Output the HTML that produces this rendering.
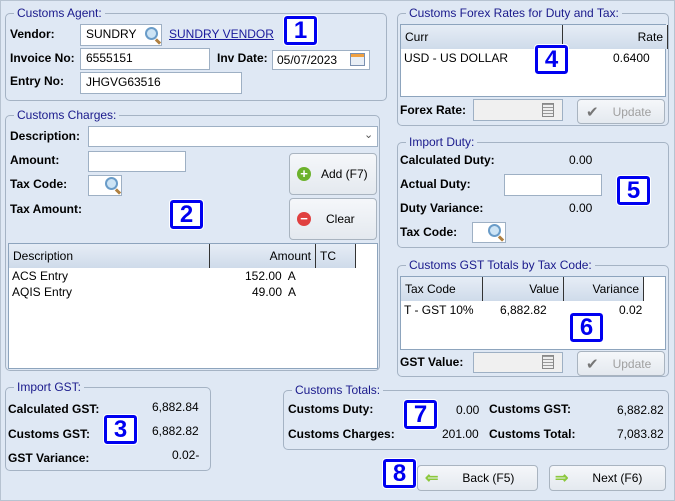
<!DOCTYPE html>
<html><head><style>
*{box-sizing:border-box}
body{margin:0;width:675px;height:501px;background:#dfe8f4;font-family:"Liberation Sans",Arial,sans-serif;font-size:12px;color:#000;position:relative;overflow:hidden}
.a{position:absolute}
.g{position:absolute;border:1px solid #a5b3c4;border-radius:5px}
.gt{position:absolute;top:-8px;left:8px;background:#dfe8f4;color:#1a1a8c;padding:0 3px;font-size:12px;line-height:14px}
.b{font-weight:bold}
.in{position:absolute;background:#fff;border:1px solid #9eb0c4;padding:2px 5px;line-height:14px}
.dis{background:#f0f0f0}
.btn{position:absolute;border:1px solid #a9b4c0;border-radius:4px;background:linear-gradient(#f5f7fa,#e4e9ef);display:flex;align-items:center}
.box{position:absolute;width:33px;height:29px;border:3px solid #0000f0;border-radius:3px;background:#fff;color:#0000f0;font-weight:bold;font-size:24px;text-align:center;line-height:23px;outline:1px solid #fff}
.grid{position:absolute;background:#fff;border:1px solid #8da4bd}
.hd{position:absolute;top:0;height:24px;background:linear-gradient(#e6edf6,#cfdbea);border-right:1px solid #333;line-height:24px;padding:0 4px}
.mag{position:absolute;width:13px;height:13px;border:2px solid #6a9cc8;border-radius:50%;background:#cde4f5}
.mag:after{content:"";position:absolute;width:6px;height:3px;background:#b08040;transform:rotate(45deg);left:8px;top:11px}
</style></head><body>
<div class="a" style="left:0;top:0;width:675px;height:501px;border:1px solid #b7c3d1"></div>

<!-- Customs Agent -->
<div class="g" style="left:5px;top:13px;width:382px;height:88px"><span class="gt">Customs Agent:</span></div>
<div class="a b" style="left:10px;top:27px">Vendor:</div>
<div class="in" style="left:80px;top:24px;width:82px;height:22px">SUNDRY</div>
<div class="mag" style="left:145px;top:27px"></div>
<div class="a" style="left:169px;top:27px;color:#1a1a9c;text-decoration:underline">SUNDRY VENDOR</div>
<div class="box" style="left:284px;top:16px">1</div>
<div class="a b" style="left:10px;top:51px">Invoice No:</div>
<div class="in" style="left:80px;top:48px;width:130px;height:22px">6555151</div>
<div class="a b" style="left:217px;top:51px">Inv Date:</div>
<div class="in" style="left:272px;top:50px;width:98px;height:20px;padding-left:4px">05/07/2023</div>
<div class="a" style="left:350px;top:53px;width:15px;height:13px;border:1px solid #7a90b0;background:linear-gradient(#f0a040 0 3px,#e8eef5 3px)"></div>
<div class="a b" style="left:10px;top:74px">Entry No:</div>
<div class="in" style="left:80px;top:72px;width:162px;height:22px">JHGVG63516</div>

<!-- Customs Charges -->
<div class="g" style="left:5px;top:115px;width:375px;height:256px"><span class="gt">Customs Charges:</span></div>
<div class="a b" style="left:10px;top:129px">Description:</div>
<div class="in" style="left:88px;top:126px;width:290px;height:21px"></div>
<div class="a" style="left:364px;top:128px;font-size:11px;color:#555">&#8964;</div>
<div class="a b" style="left:10px;top:153px">Amount:</div>
<div class="in" style="left:88px;top:151px;width:98px;height:21px"></div>
<div class="a b" style="left:10px;top:177px">Tax Code:</div>
<div class="in" style="left:88px;top:175px;width:34px;height:21px"></div>
<div class="mag" style="left:105px;top:177px"></div>
<div class="a b" style="left:10px;top:202px">Tax Amount:</div>
<div class="box" style="left:170px;top:200px">2</div>
<div class="btn" style="left:289px;top:153px;width:88px;height:42px"><span style="margin-left:7px;width:14px;height:14px;border-radius:50%;background:#6cb22c;color:#fff;font-size:13px;line-height:14px;text-align:center;font-weight:bold">+</span><span style="margin-left:10px">Add (F7)</span></div>
<div class="btn" style="left:289px;top:198px;width:88px;height:42px"><span style="margin-left:7px;width:14px;height:14px;border-radius:50%;background:#e04040;color:#fff;font-size:13px;line-height:13px;text-align:center;font-weight:bold">&minus;</span><span style="margin-left:15px">Clear</span></div>
<div class="grid" style="left:8px;top:243px;width:370px;height:126px">
 <div class="hd" style="left:0;width:201px">Description</div>
 <div class="hd" style="left:201px;width:106px;text-align:right">Amount</div>
 <div class="hd" style="left:307px;width:40px">TC</div>
 <div class="a" style="left:3px;top:25px">ACS Entry</div><div class="a" style="left:236px;top:25px">152.00&nbsp; A</div>
 <div class="a" style="left:3px;top:41px">AQIS Entry</div><div class="a" style="left:243px;top:41px">49.00&nbsp; A</div>
</div>

<!-- Forex -->
<div class="g" style="left:397px;top:13px;width:272px;height:113px"><span class="gt">Customs Forex Rates for Duty and Tax:</span></div>
<div class="grid" style="left:400px;top:24px;width:266px;height:73px">
 <div class="hd" style="left:0;width:162px">Curr</div>
 <div class="hd" style="left:162px;width:105px;text-align:right">Rate</div>
 <div class="a" style="left:3px;top:26px">USD - US DOLLAR</div><div class="a" style="left:212px;top:26px">0.6400</div>
</div>
<div class="box" style="left:535px;top:45px">4</div>
<div class="a b" style="left:400px;top:103px">Forex Rate:</div>
<div class="in dis" style="left:473px;top:99px;width:90px;height:22px"></div>
<div class="a" style="left:542px;top:103px;width:12px;height:14px;border:1px solid #888;background:repeating-linear-gradient(#999 0 1px,#eee 1px 3px)"></div>
<div class="btn" style="left:577px;top:99px;width:88px;height:25px;color:#a0a0a0"><span style="margin-left:8px;color:#777;font-size:15px">&#10004;</span><span style="margin-left:14px">Update</span></div>

<!-- Import Duty -->
<div class="g" style="left:397px;top:142px;width:272px;height:106px"><span class="gt">Import Duty:</span></div>
<div class="a b" style="left:400px;top:153px">Calculated Duty:</div><div class="a" style="left:569px;top:153px">0.00</div>
<div class="a b" style="left:400px;top:177px">Actual Duty:</div>
<div class="in" style="left:504px;top:174px;width:98px;height:22px"></div>
<div class="box" style="left:617px;top:176px">5</div>
<div class="a b" style="left:400px;top:201px">Duty Variance:</div><div class="a" style="left:569px;top:201px">0.00</div>
<div class="a b" style="left:400px;top:225px">Tax Code:</div>
<div class="in" style="left:472px;top:222px;width:34px;height:21px"></div>
<div class="mag" style="left:488px;top:224px"></div>

<!-- GST totals -->
<div class="g" style="left:397px;top:265px;width:272px;height:112px"><span class="gt">Customs GST Totals by Tax Code:</span></div>
<div class="grid" style="left:400px;top:276px;width:266px;height:74px">
 <div class="hd" style="left:0;width:82px">Tax Code</div>
 <div class="hd" style="left:82px;width:81px;text-align:right">Value</div>
 <div class="hd" style="left:163px;width:80px;text-align:right">Variance</div>
 <div class="a" style="left:3px;top:26px">T - GST 10%</div><div class="a" style="left:99px;top:26px">6,882.82</div><div class="a" style="left:218px;top:26px">0.02</div>
</div>
<div class="box" style="left:570px;top:313px">6</div>
<div class="a b" style="left:400px;top:355px">GST Value:</div>
<div class="in dis" style="left:473px;top:352px;width:90px;height:21px"></div>
<div class="a" style="left:542px;top:355px;width:12px;height:14px;border:1px solid #888;background:repeating-linear-gradient(#999 0 1px,#eee 1px 3px)"></div>
<div class="btn" style="left:577px;top:351px;width:88px;height:25px;color:#a0a0a0"><span style="margin-left:8px;color:#777;font-size:15px">&#10004;</span><span style="margin-left:14px">Update</span></div>

<!-- Import GST -->
<div class="g" style="left:5px;top:387px;width:206px;height:84px"><span class="gt">Import GST:</span></div>
<div class="a b" style="left:8px;top:402px">Calculated GST:</div><div class="a" style="left:152px;top:400px">6,882.84</div>
<div class="a b" style="left:8px;top:427px">Customs GST:</div><div class="a" style="left:152px;top:424px">6,882.82</div>
<div class="box" style="left:104px;top:415px">3</div>
<div class="a b" style="left:8px;top:451px">GST Variance:</div><div class="a" style="left:172px;top:448px">0.02-</div>

<!-- Customs Totals -->
<div class="g" style="left:283px;top:390px;width:386px;height:60px"><span class="gt">Customs Totals:</span></div>
<div class="a b" style="left:288px;top:402px">Customs Duty:</div><div class="a" style="left:456px;top:403px">0.00</div>
<div class="a b" style="left:489px;top:402px">Customs GST:</div><div class="a" style="left:617px;top:403px">6,882.82</div>
<div class="a b" style="left:288px;top:427px">Customs Charges:</div><div class="a" style="left:442px;top:427px">201.00</div>
<div class="a b" style="left:489px;top:427px">Customs Total:</div><div class="a" style="left:617px;top:427px">7,083.82</div>
<div class="box" style="left:404px;top:400px">7</div>

<!-- Nav -->
<div class="box" style="left:383px;top:459px">8</div>
<div class="btn" style="left:417px;top:465px;width:121px;height:26px"><span style="margin-left:7px;color:#8cc83c;font-size:16px;font-weight:bold">&#8656;</span><span style="margin-left:24px">Back (F5)</span></div>
<div class="btn" style="left:549px;top:465px;width:117px;height:26px"><span style="margin-left:5px;color:#8cc83c;font-size:16px;font-weight:bold">&#8658;</span><span style="margin-left:24px">Next (F6)</span></div>
</body></html>
